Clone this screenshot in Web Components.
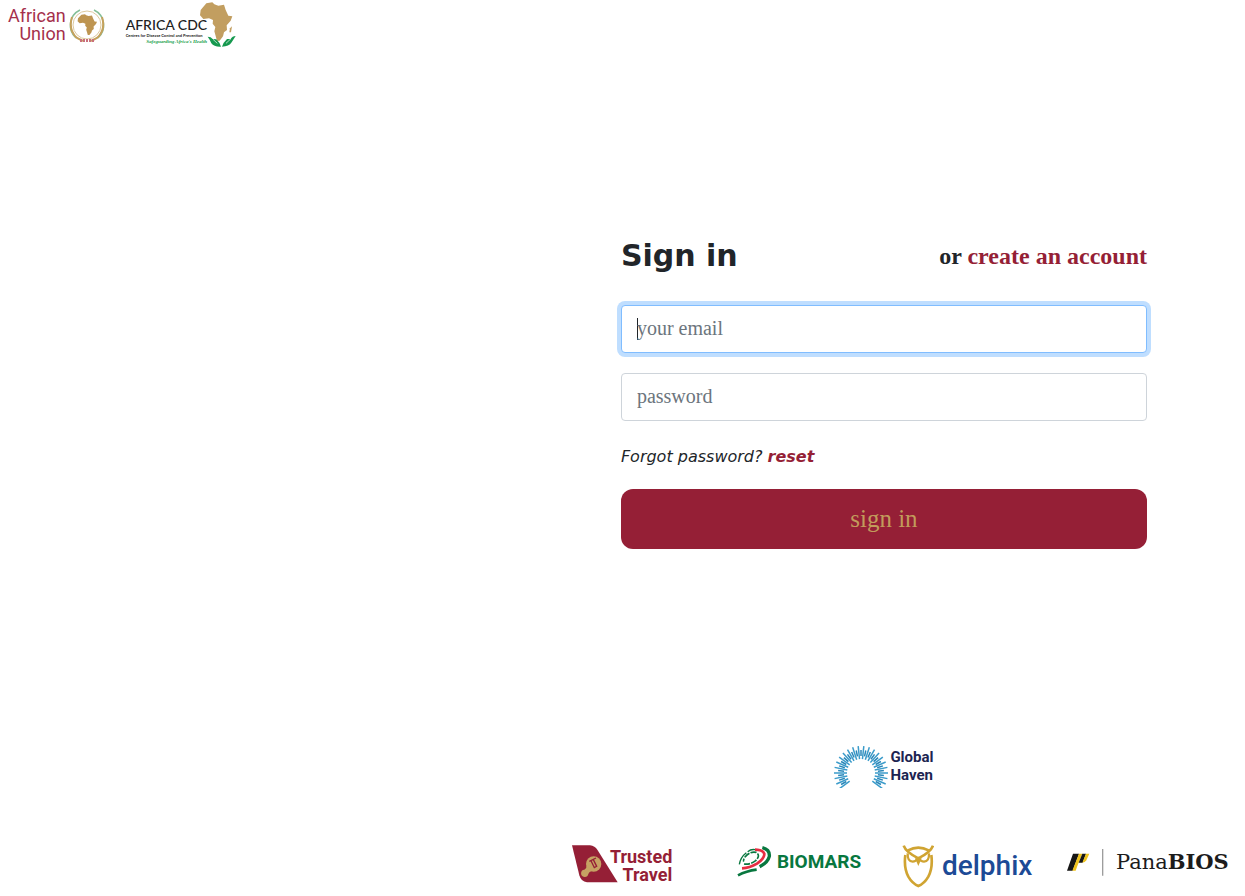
<!DOCTYPE html>
<html lang="en">
<head>
<meta charset="utf-8">
<meta name="viewport" content="width=device-width, initial-scale=1">
<title>Sign in</title>
<style>
:root {
    --brand: #951f36;
    --brand-gold: #c29b5b;
    --text: #212529;
    --muted: #6c757d;
    --logo-font: Roboto, "Liberation Sans", sans-serif;
}
body {
    margin: 0;
    background: #fff;
    color: var(--text);
    font-family: "Liberation Serif", "Times New Roman", serif;
}
</style>
</head>
<body>
<login-page></login-page>

<script>
// shared helper, every element clones its own template
function attach(el, template) {
    const shadow = el.attachShadow({mode: "open"});
    shadow.appendChild(template.content.cloneNode(true));
    return shadow;
}

function makeTemplate(html) {
    const t = document.createElement("template");
    t.innerHTML = html;
    return t;
}

/* icon + wordmark side by side */
const BrandLogoTemplate = makeTemplate(`
<style>
:host {
    display: flex;
    align-items: center;
    gap: 2px;
    white-space: nowrap;
}
</style>
<slot name="icon"></slot>
<slot></slot>
<slot name="after"></slot>
`);

class BrandLogo extends HTMLElement{
    constructor(){
        super();
        attach(this, BrandLogoTemplate);
    }
}
customElements.define("brand-logo", BrandLogo);

/* ring of rays, long and short ones alternate */
class SunRays extends HTMLElement{
    constructor(){
        super();
        const shadow = this.attachShadow({mode: "open"});
        let rays = "";
        for(let i = 0; i <= 42; i++){
            const a = (-36 + i * 6) * Math.PI / 180;
            const inner = i % 2 ? 17 : 14;
            const outer = i % 2 ? 23 : 27;
            const color = i % 2 ? "#2a86b8" : "#3a9bca";
            rays += `<line x1="${27 - inner * Math.cos(a)}" y1="${29 - inner * Math.sin(a)}"
                x2="${27 - outer * Math.cos(a)}" y2="${29 - outer * Math.sin(a)}" stroke="${color}"/>`;
        }
        shadow.innerHTML = `
            <style>
            :host { display: block; }
            svg { display: block; }
            </style>
            <svg width="54" height="44" viewBox="0 0 54 44" stroke-width="1.5" aria-hidden="true">${rays}</svg>`;
    }
}
customElements.define("sun-rays", SunRays);

const TextFieldTemplate = makeTemplate(`
<style>
:host {
    display: block;
}
label {
    position: absolute;
    width: 1px;
    height: 1px;
    overflow: hidden;
    clip-path: inset(50%);
}
input {
    display: block;
    box-sizing: border-box;
    width: 100%;
    height: 48px;
    padding: 0 15px;
    border: 1px solid #ced4da;
    border-radius: 4px;
    background: #fff;
    color: #495057;
    font-family: inherit;
    font-size: 20px;
}
input::placeholder {
    color: var(--muted);
    opacity: 1;
}
input:focus {
    outline: 0;
    border-color: #80bdff;
    box-shadow: 0 0 0 4px #bfdeff;
}
/* steady cursor while the field is empty */
input:focus:placeholder-shown {
    caret-color: transparent;
    background: linear-gradient(#212529, #212529) 15px center / 1px 22px no-repeat #fff;
}
</style>
<label for="field"></label>
<input id="field">
`);

class TextField extends HTMLElement{
    constructor(){
        super();
        this.shadow = attach(this, TextFieldTemplate);
        this.inputElement = this.shadow.querySelector("input");
        this.labelElement = this.shadow.querySelector("label");
    }
    connectedCallback(){
        const label = this.getAttribute("label");
        this.labelElement.setAttribute("title", label);
        this.inputElement.setAttribute("aria-label", label);
        this.inputElement.setAttribute("placeholder", label);
        this.inputElement.setAttribute("type", this.getAttribute("type") || "text");
        if(this.hasAttribute("focused")){
            this.inputElement.focus();
        }
    }
    get value(){
        return this.inputElement.value;
    }
    set value(newValue){
        this.inputElement.value = newValue;
    }
}
customElements.define("text-field", TextField);

const SignInFormTemplate = makeTemplate(`
<style>
:host {
    display: block;
}
header {
    display: flex;
    justify-content: space-between;
    align-items: center;
    margin-bottom: 31px;
}
h1, h2, p {
    margin: 0;
}
h1 {
    font: bold 30px/36px Verdana, "DejaVu Sans", sans-serif;
}
h2 {
    font-size: 24px;
    line-height: 36px;
}
a {
    color: var(--brand);
    font-weight: bold;
    text-decoration: none;
}
form {
    display: grid;
    gap: 20px;
}
p {
    padding-top: 4px;
    font: italic 16px/24px Verdana, "DejaVu Sans", sans-serif;
}
button {
    height: 60px;
    border: 0;
    border-radius: 12px;
    background: var(--brand);
    color: var(--brand-gold);
    font-family: inherit;
    font-size: 25px;
    cursor: pointer;
}
</style>
<header>
    <h1>Sign in</h1>
    <h2>or <a href="#register">create an account</a></h2>
</header>
<form>
    <text-field type="email" label="your email" focused></text-field>
    <text-field type="password" label="password"></text-field>
    <p>Forgot password? <a href="#reset">reset</a></p>
    <button type="submit">sign in</button>
</form>
`);

class SignInForm extends HTMLElement{
    constructor(){
        super();
        const shadow = attach(this, SignInFormTemplate);
        shadow.querySelector("form").addEventListener("submit", e => e.preventDefault());
    }
}
customElements.define("sign-in-form", SignInForm);

const africa = "M22 4 40 1 46 7 58 11 75 8 80 24 88 41 100 43 95 56 83 70 84 84 75 91 72 103 62 116 54 117 50 102 46 88 49 75 41 65 42 54 30 49 13 51 3 40 5 24Z";

const LoginPageTemplate = makeTemplate(`
<style>
:host {
    display: grid;
    grid-template-columns: 42fr 58fr;
    min-height: 100vh;
}
svg {
    display: block;
    flex: none;
}
.partners {
    display: flex;
    align-items: flex-start;
    gap: 20px;
    padding: 2px 8px;
}
.union {
    color: #a5304c;
    font: 18px/18px var(--logo-font);
    text-align: right;
}
.cdc {
    display: grid;
    padding-top: 12px;
    color: #222;
    font: 500 14px/16px Lato, sans-serif;
}
.cdc small {
    font-size: 4px;
    line-height: 5px;
    font-weight: bold;
}
.cdc em {
    color: #19a04b;
    font: italic bold 5px/8px "Liberation Serif", serif;
    text-align: right;
}
main {
    display: flex;
    flex-direction: column;
    padding-bottom: 8px;
}
.center {
    flex: 1;
    display: grid;
    align-items: center;
    padding: 42px 98px 0;
}
.haven {
    justify-content: center;
    margin-bottom: 56px;
}
.haven span {
    color: #1c2451;
    font: bold 15px/18px var(--logo-font);
}
footer {
    display: grid;
    grid-template-columns: repeat(4, 1fr);
    align-items: center;
    padding: 0 13px 0 49px;
}
.travel {
    gap: 0;
    color: var(--brand);
    font: bold 18px/18px var(--logo-font);
    text-align: right;
}
.travel span {
    margin-left: -8px;
}
.biomars, .bios {
    align-self: start;
}
.biomars {
    gap: 4px;
    color: #08773f;
    font: bold 19px/24px var(--logo-font);
}
.delphix {
    gap: 8px;
    color: #1c4a96;
    font: 500 28px/40px var(--logo-font);
}
.bios {
    gap: 12px;
    color: #1c1c1c;
    font: 21px/24px "DejaVu Serif", serif;
}
</style>
<div class="partners">
    <brand-logo>
        <span class="union">African<br>Union</span>
        <svg slot="after" width="38" height="46" viewBox="0 0 38 46" fill="none" aria-hidden="true">
            <path d="M12 8A17 17 0 0 0 8 36M26 8A17 17 0 0 1 30 36" stroke="#85bf98" stroke-width="1.5"/>
            <circle cx="19" cy="23" r="14" stroke="#dcc99e" stroke-width="1"/>
            <path d="M4 15Q0 28 9 36L15 39M34 15Q38 28 29 36L23 39" stroke="#c5a15c" stroke-width="2"/>
            <path d="M12 38.500H26" stroke="#c9707c" stroke-width="3" stroke-dasharray="2 1"/>
            <path d="${africa}" transform="translate(9 12) scale(.2 .18)" fill="#be9551"/>
        </svg>
    </brand-logo>
    <brand-logo>
        <span class="cdc">AFRICA CDC
            <small>Centres for Disease Control and Prevention</small>
            <em>Safeguarding Africa's Health</em>
        </span>
        <svg slot="after" width="38" height="46" viewBox="0 0 114 138" style="margin-left:-10px" aria-hidden="true">
            <path d="${africa}" fill="#c29e60"/>
            <path d="M99 73 93 79 91 91 96 91Z" fill="#c29e60"/>
            <path d="M26 104Q36 104 41 111L52 112Q62 121 66 134Q45 135 37 124Q33 113 26 104ZM110 102Q100 102 95 111L84 111Q73 121 69 134Q90 134 98 121Z" fill="#16994f"/>
            <path d="M42 112 55 124M96 110 81 124" stroke="#fff" stroke-width="2"/>
        </svg>
    </brand-logo>
</div>
<main>
    <div class="center">
        <sign-in-form></sign-in-form>
    </div>
    <brand-logo class="haven">
        <sun-rays slot="icon"></sun-rays>
        <span>Global<br>Haven</span>
    </brand-logo>
    <footer>
        <brand-logo class="travel">
            <svg slot="icon" width="46" height="44" viewBox="0 0 138 132" aria-hidden="true">
                <path d="M0 4H54Q69 6 76 17L137 115H45Q27 113 22 94Z" fill="#951f36"/>
                <circle cx="65" cy="60" r="23" fill="#c6a163"/>
                <path d="M44 66 60 80Q50 84 49 90A11 11 0 1 1 37 77Q44 74 44 66Z" fill="#c6a163"/>
                <path d="M52 52 72 42M57 50 67 71 74 67 64 47" stroke="#951f36" stroke-width="4" fill="none"/>
            </svg>
            <span>Trusted<br>Travel</span>
        </brand-logo>
        <brand-logo class="biomars">
            <svg slot="icon" width="36" height="36" viewBox="0 0 108 108" fill="none" aria-hidden="true">
                <path d="M3 94Q28 81 59 77" stroke="#08773f" stroke-width="8"/>
                <path d="M68 68Q92 56 97 37Q99 17 76 11" stroke="#08773f" stroke-width="10"/>
                <path d="M15 73Q38 72 60 59Q83 43 82 29Q77 17 54 17" stroke="#e62d42" stroke-width="8"/>
                <path d="M7 61Q10 40 28 26M32 23Q42 15 54 17" stroke="#08773f" stroke-width="4"/>
                <path d="M21 60Q39 63 56 50Q72 34 57 25Q40 21 24 39Q18 48 20 53" stroke="#08773f" stroke-width="5" stroke-dasharray="18 4"/>
            </svg>
            <span>BIOMARS</span>
        </brand-logo>
        <brand-logo class="delphix">
            <svg slot="icon" width="32" height="44" viewBox="0 0 96 132" fill="none" stroke="#d0a432" stroke-width="8" aria-hidden="true">
                <path d="M5 5Q12 25 49 43Q86 25 93 5"/>
                <path d="M18 19Q49 3 80 19"/>
                <path d="M10 33Q5 72 19 98Q31 119 49 126Q67 119 79 98Q93 72 88 33"/>
                <path d="M17 28Q16 52 32 53Q41 53 49 43Q57 53 66 53Q82 52 81 28" stroke-width="7"/>
                <path d="M39 43H59L49 66Z" fill="#d0a432" stroke="none"/>
            </svg>
            <span>delphix</span>
        </brand-logo>
        <brand-logo class="bios">
            <svg slot="icon" width="37" height="36" viewBox="0 0 111 108" aria-hidden="true">
                <path d="M18 29H36L17 80H0Z" fill="#161616"/>
                <path d="M36 29H46L31 66 26 80H16Z" fill="#efc31d"/>
                <path d="M46 29H57L47 56H35Z" fill="#161616"/>
                <path d="M57 29H67L58 49Q54 56 46 56Z" fill="#efc31d"/>
                <path d="M107 15V95" stroke="#9d9d9d" stroke-width="4"/>
            </svg>
            <span>Pana<b>BIOS</b></span>
        </brand-logo>
    </footer>
</main>
`);

class LoginPage extends HTMLElement{
    constructor(){
        super();
        attach(this, LoginPageTemplate);
    }
}
customElements.define("login-page", LoginPage);
</script>
</body>
</html>
